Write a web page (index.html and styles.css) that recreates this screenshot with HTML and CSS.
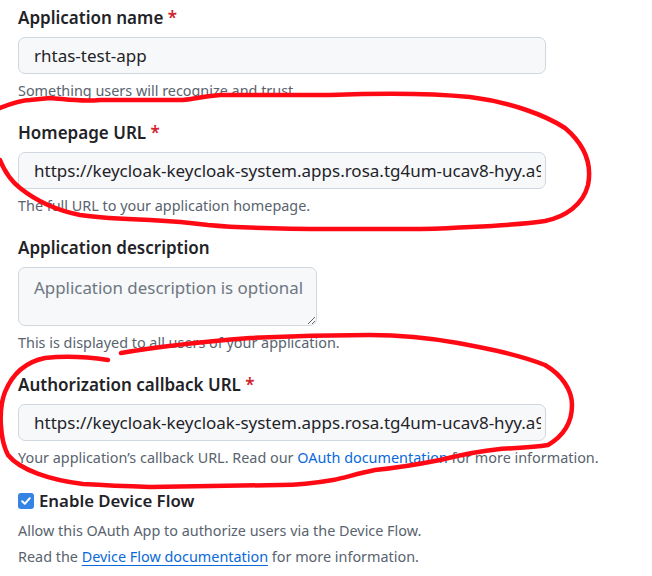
FILE: index.html
```html
<!DOCTYPE html>
<html>
<head>
<meta charset="utf-8">
<link rel="stylesheet" href="styles.css">
</head>
<body>
<form class="form">
  <div class="group">
    <label class="label">Application name <span class="req">*</span></label>
    <input class="field" type="text" value="rhtas-test-app">
    <p class="note">Something users will recognize and trust.</p>
  </div>
  <div class="group">
    <label class="label">Homepage URL <span class="req">*</span></label>
    <input class="field" type="text" value="https://keycloak-keycloak-system.apps.rosa.tg4um-ucav8-hyy.a9p3.p1.openshiftapps.com">
    <p class="note">The full URL to your application homepage.</p>
  </div>
  <div class="group">
    <label class="label">Application description</label>
    <textarea class="area" placeholder="Application description is optional"></textarea>
    <p class="note">This is displayed to all users of your application.</p>
  </div>
  <div class="group">
    <label class="label">Authorization callback URL <span class="req">*</span></label>
    <input class="field" type="text" value="https://keycloak-keycloak-system.apps.rosa.tg4um-ucav8-hyy.a9p3.p1.openshiftapps.com">
    <p class="note">Your application’s callback URL. Read our <a class="link" href="#">OAuth documentation</a> for more information.</p>
  </div>
  <div class="group check-group">
    <label class="check-label"><span class="box"><svg width="12" height="12" viewBox="0 0 12 12"><path d="M2.2 6.3 L4.8 8.8 L9.8 3.2" fill="none" stroke="#fff" stroke-width="2" stroke-linecap="round" stroke-linejoin="round"/></svg></span>Enable Device Flow</label>
    <p class="note small first">Allow this OAuth App to authorize users via the Device Flow.</p>
    <p class="note small">Read the <a class="link under" href="#">Device Flow documentation</a> for more information.</p>
  </div>
</form>
<svg class="marks" width="652" height="576" viewBox="0 0 652 576">
  <path d="M0,108 C10,104 20,100 30,100 L50,98 C65,99 80,102 100,100 L183,100 C195,99 205,96 220,95 L330,95 C380,93 430,93 470,97 C510,102 545,115 565,128 C585,145 592,165 588,185 C583,205 565,217 545,221 C520,225 480,227 420,229 L333,229 C290,229 240,228 208,225 C185,222 170,221 150,220 C120,219 100,218 80,215 C55,210 35,200 20,188 C10,180 4,170 0,160"/>
  <path d="M121,353 C150,348 200,342 250,338 C290,336 330,335 370,335 C400,335 430,338 458,343 C490,349 520,355 545,365 C562,375 572,390 572,405 C572,420 565,435 548,445 C530,448 510,448 500,449 C480,451 460,455 440,460 C420,464 395,468 375,470 C355,474 345,478 333,480 C310,484 300,485 280,485 L150,487 C120,486 100,485 83,484 C50,480 20,470 8,455 C0,440 -2,410 5,392 C12,375 25,362 45,358 C70,355 95,358 108,360"/>
</svg>
</body>
</html>
```
FILE: styles.css
```css
html, body {
  margin: 0;
  padding: 0;
  background: #ffffff;
}
body {
  font-family: "Noto Sans", "DejaVu Sans", sans-serif;
  color: #1f2328;
  position: relative;
  width: 652px;
  height: 576px;
  overflow: hidden;
}
.form {
  padding: 6px 0 0 18px;
  display: flex;
  flex-direction: column;
  gap: 18px;
}
.group {
  display: flex;
  flex-direction: column;
  align-items: flex-start;
}
.label {
  font-size: 17px;
  font-weight: 600;
  line-height: 24px;
  margin-bottom: 7px;
}
.req {
  color: #d1242f;
}
.field {
  box-sizing: border-box;
  width: 528px;
  height: 37px;
  border: 1px solid #d0d7de;
  border-radius: 7px;
  background: #f6f8fa;
  padding: 0 4px 0 15px;
  font-family: "Noto Sans", "DejaVu Sans", sans-serif;
  font-size: 17px;
  color: #1f2328;
  margin: 0;
  outline: none;
}
.area {
  box-sizing: border-box;
  width: 299px;
  height: 59px;
  border: 1px solid #d0d7de;
  border-radius: 7px;
  background: #f6f8fa;
  padding: 8px 4px 8px 15px;
  font-family: "Noto Sans", "DejaVu Sans", sans-serif;
  font-size: 16.9px;
  line-height: 24px;
  color: #1f2328;
  margin: 0;
  resize: vertical;
  outline: none;
  white-space: nowrap;
  overflow: hidden;
}
.area::placeholder {
  color: #6e7781;
  white-space: nowrap;
}
.note {
  margin: 5px 0 0;
  font-size: 14.4px;
  line-height: 24px;
  color: #59636e;
}
.link {
  color: #0969da;
  text-decoration: none;
}
.link.under {
  text-decoration: underline;
  text-underline-offset: 3px;
}
.check-group {
  margin-top: 1px;
}
.check-label {
  display: flex;
  align-items: center;
  gap: 5px;
  font-size: 16.8px;
  font-weight: 600;
  line-height: 24px;
}
.box {
  width: 16px;
  height: 16px;
  border-radius: 3px;
  background: #3584e4;
  display: flex;
  align-items: center;
  justify-content: center;
}
.note.small {
  line-height: 26px;
  margin: 0;
}
.note.small.first {
  margin-top: 5px;
}
.marks {
  position: absolute;
  left: 0;
  top: 0;
  pointer-events: none;
}
.marks path {
  fill: none;
  stroke: #ff0a14;
  stroke-width: 4.5;
  stroke-linecap: round;
  stroke-linejoin: round;
}
```
